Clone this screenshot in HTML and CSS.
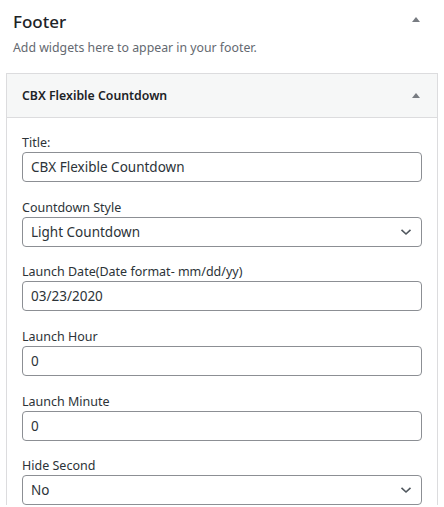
FILE: index.html
```html
<!DOCTYPE html>
<html lang="en">
<head>
<meta charset="utf-8">
<title>Footer widgets</title>
<link rel="stylesheet" href="styles.css">
</head>
<body>
<section class="section">
  <div class="section-head">
    <h3 class="section-title">Footer</h3>
    <span class="arrow" aria-hidden="true"></span>
  </div>
  <p class="section-desc">Add widgets here to appear in your footer.</p>

  <div class="widget">
    <div class="widget-top">
      <h3 class="widget-title">CBX Flexible Countdown</h3>
      <span class="arrow" aria-hidden="true"></span>
    </div>
    <div class="widget-inside">
      <div class="field">
        <label class="label">Title:</label>
        <input class="input" type="text" value="CBX Flexible Countdown">
      </div>
      <div class="field">
        <label class="label">Countdown Style</label>
        <div class="select">
          <span class="select-value">Light Countdown</span>
          <svg class="chevron" width="12" height="8" viewBox="0 0 12 8"><path d="M1.5 1.8 L6 6 L10.5 1.8" fill="none" stroke="#50575e" stroke-width="1.6"/></svg>
        </div>
      </div>
      <div class="field">
        <label class="label">Launch Date(Date format- mm/dd/yy)</label>
        <input class="input" type="text" value="03/23/2020">
      </div>
      <div class="field">
        <label class="label">Launch Hour</label>
        <input class="input" type="text" value="0">
      </div>
      <div class="field">
        <label class="label">Launch Minute</label>
        <input class="input" type="text" value="0">
      </div>
      <div class="field">
        <label class="label">Hide Second</label>
        <div class="select">
          <span class="select-value">No</span>
          <svg class="chevron" width="12" height="8" viewBox="0 0 12 8"><path d="M1.5 1.8 L6 6 L10.5 1.8" fill="none" stroke="#50575e" stroke-width="1.6"/></svg>
        </div>
      </div>
    </div>
  </div>
</section>
</body>
</html>
```
FILE: styles.css
```css
* { box-sizing: border-box; }
html, body { margin: 0; padding: 0; background: #fff; }
body {
  font-family: "Noto Sans", "Open Sans", sans-serif;
  color: #1d2327;
  font-size: 13px;
  width: 444px;
  height: 507px;
  overflow: hidden;
}
.section { padding: 0 0 0 6px; }
.section-head {
  display: flex;
  align-items: center;
  justify-content: space-between;
  padding: 9px 24px 0 7px;
  height: 34px;
}
.section-title {
  margin: 0;
  font-size: 17px;
  font-weight: 500;
  line-height: 24px;
}
.arrow {
  width: 0; height: 0;
  border-left: 4px solid transparent;
  border-right: 4px solid transparent;
  border-bottom: 5px solid #787c82;
}
.section-head .arrow { margin-top: -4px; }
.section-desc {
  margin: 0;
  padding: 4px 0 0 7px;
  color: #646970;
  font-size: 12.3px;
  line-height: 20px;
  height: 39px;
}
.widget {
  width: 432px;
  border: 1px solid #dcdcde;
  border-bottom: 0;
}
.widget-top {
  display: flex;
  align-items: center;
  justify-content: space-between;
  height: 44px;
  background: #f6f7f7;
  border-bottom: 1px solid #dcdcde;
  padding: 0 17px 0 15px;
}
.widget-title {
  margin: 0;
  font-size: 12.3px;
  font-weight: 600;
  line-height: 18px;
}
.widget-inside {
  padding: 16px 15px 0;
  display: flex;
  flex-direction: column;
  gap: 16.7px;
}
.field { display: flex; flex-direction: column; }
.label {
  font-size: 12.5px;
  line-height: 18px;
  color: #2c3338;
}
.input, .select {
  width: 400px;
  height: 30px;
  border: 1px solid #8c8f94;
  border-radius: 4px;
  background: #fff;
  font-family: inherit;
  font-size: 13.5px;
  color: #2c3338;
  padding: 0 8px;
  margin: 0;
}
.select {
  display: flex;
  align-items: center;
  justify-content: space-between;
  padding: 0 8px 0 8px;
}
.select-value { line-height: 28px; }
.chevron { display: block; margin-right: 1px; }
```
